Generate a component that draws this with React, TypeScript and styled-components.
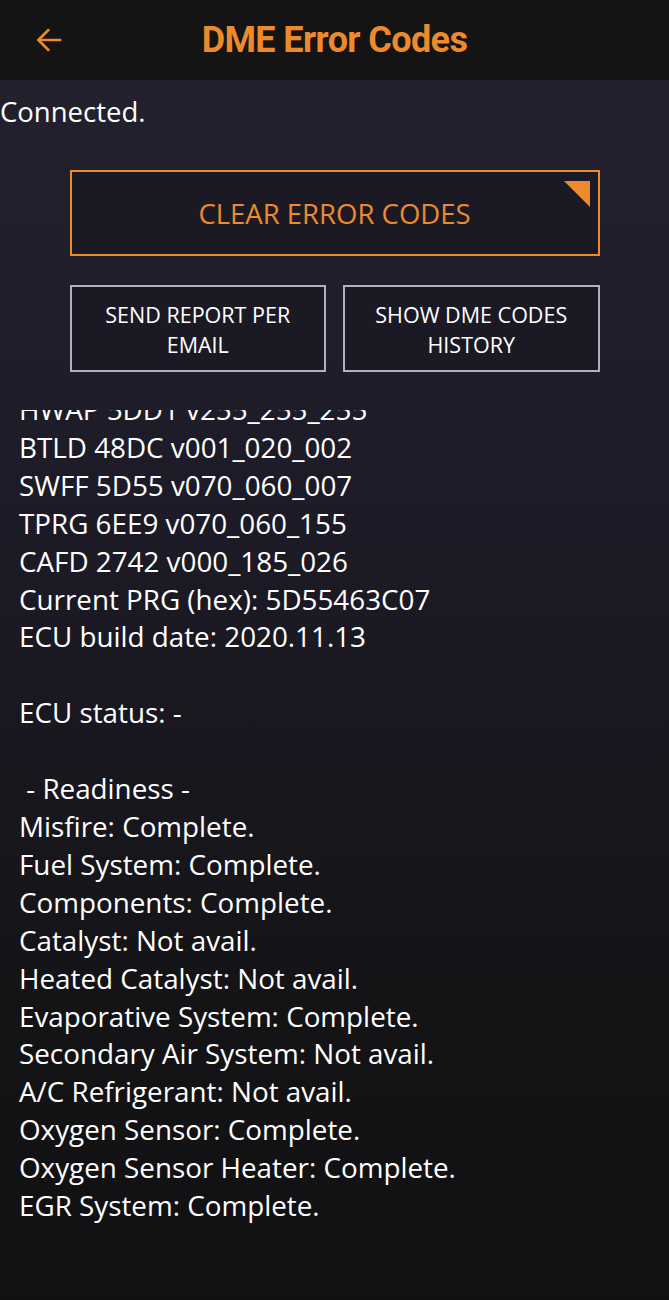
import React from 'react';
import styled, { createGlobalStyle } from 'styled-components';

const GlobalStyle = createGlobalStyle`
  html, body {
    margin: 0;
    padding: 0;
    background: #121214;
  }
  body {
    font-family: 'Open Sans', 'Noto Sans', sans-serif;
  }
`;

const orange = '#ec8a2c';

const Page = styled.div`
  width: 669px;
  height: 1300px;
  display: flex;
  flex-direction: column;
  overflow: hidden;
`;

const Header = styled.header`
  height: 80px;
  flex: 0 0 80px;
  background: #141414;
  display: flex;
  align-items: center;
`;

const BackButton = styled.button`
  background: none;
  border: none;
  padding: 0;
  margin-left: 33px;
  width: 32px;
  height: 32px;
  display: flex;
  align-items: center;
  justify-content: center;
  cursor: pointer;
`;

const Title = styled.h1`
  flex: 1;
  margin: 0 0 0 -65px;
  text-align: center;
  font-family: Roboto, 'Liberation Sans', sans-serif;
  font-weight: 700;
  font-size: 36px;
  letter-spacing: -0.6px;
  color: ${orange};
`;

const Body = styled.main`
  flex: 1;
  display: flex;
  flex-direction: column;
  min-height: 0;
  background: linear-gradient(to bottom, #24212f 0%, #1d1b27 35%, #141417 75%, #111113 100%);
  color: #ffffff;
`;

const Status = styled.div`
  font-size: 27.5px;
  line-height: 38px;
  margin-top: 13px;
`;

const Actions = styled.div`
  width: 530px;
  margin: 39px auto 0;
  display: flex;
  flex-direction: column;
  gap: 29px;
`;

const Row = styled.div`
  display: grid;
  grid-template-columns: 1fr 1fr;
  gap: 17px;
`;

const ActionButton = styled.button<{ $primary?: boolean }>`
  position: relative;
  box-sizing: border-box;
  height: ${p => (p.$primary ? 86 : 87)}px;
  background: #1b1a24;
  border: 2px solid ${p => (p.$primary ? orange : '#b3b1bb')};
  color: ${p => (p.$primary ? orange : '#ffffff')};
  font-family: 'Open Sans', 'Noto Sans', sans-serif;
  font-size: ${p => (p.$primary ? 27.5 : 21.5)}px;
  line-height: 30px;
  text-transform: uppercase;
  padding: 2px 10px 0;
  cursor: pointer;
`;

const Corner = styled.span`
  position: absolute;
  top: 9px;
  right: 8px;
  width: 0;
  height: 0;
  border-top: 26px solid ${orange};
  border-left: 26px solid transparent;
`;

const Log = styled.div`
  flex: 1;
  min-height: 0;
  overflow: hidden;
  margin-top: 38px;
  padding-left: 19px;
`;

const LogLines = styled.div`
  margin-top: -19px;
  font-size: 27.8px;
  line-height: 37.9px;
  white-space: pre;
`;

const lines = [
  'HWAP 5DD1 v255_255_255',
  'BTLD 48DC v001_020_002',
  'SWFF 5D55 v070_060_007',
  'TPRG 6EE9 v070_060_155',
  'CAFD 2742 v000_185_026',
  'Current PRG (hex): 5D55463C07',
  'ECU build date: 2020.11.13',
  '',
  'ECU status: -',
  '',
  ' - Readiness -',
  'Misfire: Complete.',
  'Fuel System: Complete.',
  'Components: Complete.',
  'Catalyst: Not avail.',
  'Heated Catalyst: Not avail.',
  'Evaporative System: Complete.',
  'Secondary Air System: Not avail.',
  'A/C Refrigerant: Not avail.',
  'Oxygen Sensor: Complete.',
  'Oxygen Sensor Heater: Complete.',
  'EGR System: Complete.',
];

const App: React.FC = () => {
  return (
    <Page>
      <GlobalStyle />
      <Header>
        <BackButton aria-label="back">
          <svg width="30" height="30" viewBox="0 0 24 24" fill="none" stroke={orange} strokeWidth="2" strokeLinecap="round" strokeLinejoin="round">
            <path d="M21 12H3.5" />
            <path d="M11.5 4l-8 8 8 8" />
          </svg>
        </BackButton>
        <Title>DME Error Codes</Title>
      </Header>
      <Body>
        <Status>Connected.</Status>
        <Actions>
          <ActionButton $primary>
            Clear error codes
            <Corner />
          </ActionButton>
          <Row>
            <ActionButton>Send report per email</ActionButton>
            <ActionButton>Show DME codes history</ActionButton>
          </Row>
        </Actions>
        <Log>
          <LogLines>
            {lines.map((l, i) => (
              <div key={i}>{l || '\u00a0'}</div>
            ))}
          </LogLines>
        </Log>
      </Body>
    </Page>
  );
};

export default App;
